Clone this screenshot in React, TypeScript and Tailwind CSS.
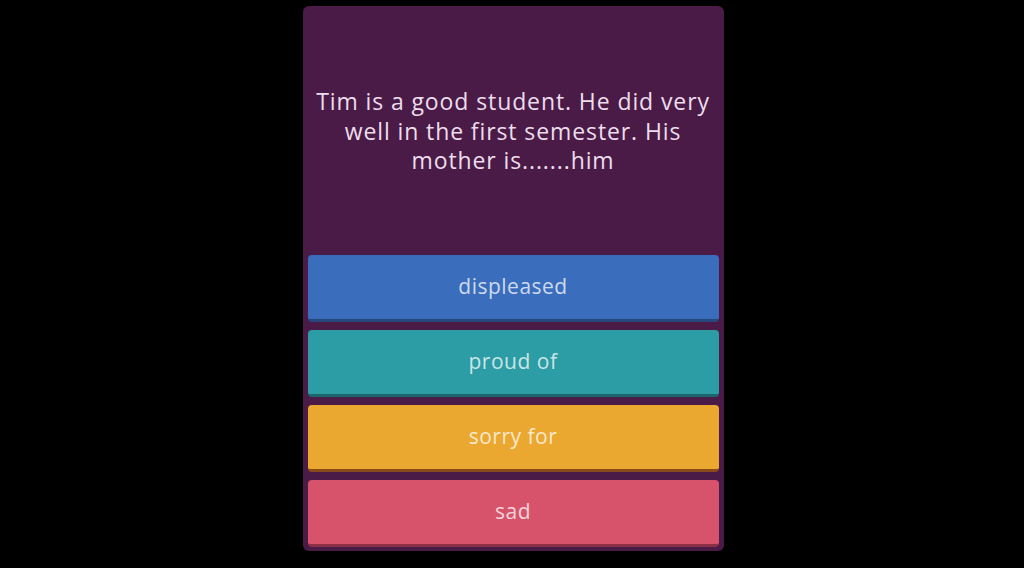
export default function App() {
  const answers = [
    { t: "displeased", bg: "bg-[#3a6dbb]", b: "border-[#27477f]" },
    { t: "proud of", bg: "bg-[#2c9da5]", b: "border-[#1d666d]" },
    { t: "sorry for", bg: "bg-[#eaa831]", b: "border-[#8a4a1c]" },
    { t: "sad", bg: "bg-[#d6536b]", b: "border-[#8a2f45]" },
  ];
  return (
    <div className="w-[1024px] h-[568px] bg-black flex justify-center pt-[6px]" style={{ fontFamily: "'Open Sans', Lato, sans-serif" }}>
      <div className="w-[421px] h-[545px] bg-[#4a1b47] rounded-[6px] flex flex-col px-[5px] pb-[3px] ml-[2px]">
        <div className="h-[249px] flex items-center justify-center px-[2px] pt-[2px]">
          <p className="text-[23px] leading-[29.5px] tracking-[0.9px] text-center text-[#ecdeec] font-medium whitespace-nowrap">
            Tim is a good student. He did very<br />well in the first semester. His<br />mother is.......him
          </p>
        </div>
        <div className="flex flex-col gap-[8px]">
          {answers.map((a) => (
            <div key={a.t} className={`${a.bg} ${a.b} h-[67px] rounded-[4px] border-b-[3px] flex items-center justify-center`}>
              <span className="text-[21px] tracking-[0.5px] text-white/75 font-medium">{a.t}</span>
            </div>
          ))}
        </div>
      </div>
    </div>
  );
}
